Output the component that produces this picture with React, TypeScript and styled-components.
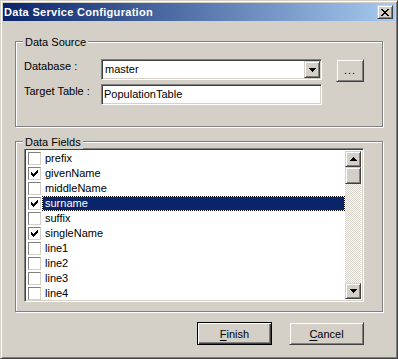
import styled, { createGlobalStyle, css } from 'styled-components';

const GlobalStyle = createGlobalStyle`
	html, body {
		margin: 0;
		padding: 0;
		background: #d4d0c8;
	}

	body {
		font-family: "Liberation Sans", Arial, sans-serif;
		font-size: 11px;
		color: #000;
	}
`;

const raised = css`
	box-sizing: border-box;
	background: #d4d0c8;
	border: 1px solid;
	border-color: #d4d0c8 #404040 #404040 #d4d0c8;
	box-shadow: inset 1px 1px #fff, inset -1px -1px #808080;
`;

const sunken = css`
	box-sizing: border-box;
	background: #fff;
	border: 1px solid;
	border-color: #808080 #fff #fff #808080;
	box-shadow: inset 1px 1px #404040, inset -1px -1px #d4d0c8;
`;

const Window = styled.div`
	width: 398px;
	height: 359px;
	box-sizing: border-box;
	padding: 2px;
	background: #d4d0c8;
	border: 1px solid;
	border-color: #d4d0c8 #404040 #404040 #d4d0c8;
	box-shadow: inset 1px 1px #fff, inset -1px -1px #808080;
	display: flex;
	flex-direction: column;
`;

const TitleBar = styled.div`
	height: 18px;
	display: flex;
	align-items: center;
	padding: 0 2px 0 1px;
	background: linear-gradient(to right, #0a246a, #a6caf0);
	color: #fff;
	font-weight: bold;
	font-size: 11px;
	letter-spacing: 0.3px;
`;

const TitleText = styled.span`
	flex: 1;
	white-space: nowrap;
`;

const CloseButton = styled.div`
	${raised};
	width: 16px;
	height: 14px;
	display: flex;
	align-items: center;
	justify-content: center;
`;

const Body = styled.div`
	padding: 20px 31px 0 12px;
	display: flex;
	flex-direction: column;
`;

const Group = styled.div<{ $height: number; $gap?: number }>`
	position: relative;
	box-sizing: border-box;
	width: 368px;
	height: ${(p) => p.$height}px;
	margin-top: ${(p) => p.$gap || 0}px;
	border: 1px solid #808080;
	box-shadow: inset 1px 1px #fff, 1px 1px #fff;
`;

const Caption = styled.span`
	position: absolute;
	top: -6px;
	left: 7px;
	padding: 0 2px;
	line-height: 13px;
	background: #d4d0c8;
`;

const SourceGrid = styled.div`
	display: grid;
	grid-template-columns: 77px 221px 42px;
	grid-template-rows: 21px 21px;
	row-gap: 4px;
	padding: 17px 0 0 8px;
`;

const Label = styled.span`
	align-self: start;
	margin-top: 1px;
	line-height: 13px;
	white-space: nowrap;
`;

const Combo = styled.div`
	${sunken};
	height: 21px;
	padding: 1px;
	display: flex;
	align-items: center;
`;

const FieldText = styled.span<{ $indent: number }>`
	flex: 1;
	padding-left: ${(p) => p.$indent}px;
	line-height: 13px;
`;

const DropButton = styled.div`
	${raised};
	width: 16px;
	height: 17px;
	display: flex;
	align-items: center;
	justify-content: center;
`;

const TextBox = styled.div`
	${sunken};
	height: 21px;
	padding: 1px;
	display: flex;
	align-items: center;
`;

const BrowseButton = styled.div`
	${raised};
	width: 28px;
	height: 23px;
	margin-left: 14px;
	display: flex;
	align-items: center;
	justify-content: center;
	padding-bottom: 2px;
	letter-spacing: 1px;
`;

const FieldsInner = styled.div`
	padding: 6px 0 0 8px;
`;

const ListBox = styled.div`
	${sunken};
	width: 340px;
	height: 154px;
	padding: 2px;
	display: flex;
`;

const Rows = styled.div`
	flex: 1;
	display: flex;
	flex-direction: column;
`;

const Row = styled.div`
	height: 15px;
	display: flex;
	align-items: center;
`;

const CheckBox = styled.div`
	box-sizing: border-box;
	width: 13px;
	height: 13px;
	margin-left: 1px;
	background: #fff;
	border: 1px solid;
	border-color: #808080 #d4d0c8 #d4d0c8 #808080;
	display: flex;
	align-items: center;
	justify-content: center;
`;

const ItemLabel = styled.span<{ $selected: boolean }>`
	flex: 1;
	box-sizing: border-box;
	height: 15px;
	margin-left: 1px;
	padding: 0 2px;
	line-height: 13px;
	border: 1px solid transparent;
	${(p) =>
		p.$selected &&
		css`
			color: #fff;
			border: 1px dotted #000;
			background: linear-gradient(#0a246a, #0a246a) padding-box,
				linear-gradient(#fff, #fff) border-box;
		`}
`;

const ScrollBar = styled.div`
	width: 16px;
	display: flex;
	flex-direction: column;
	background-image: conic-gradient(#fff 25%, #d4d0c8 0 50%, #fff 0 75%, #d4d0c8 0);
	background-size: 2px 2px;
`;

const ScrollButton = styled.div<{ $size: number }>`
	${raised};
	width: 16px;
	height: ${(p) => p.$size}px;
	flex-shrink: 0;
	display: flex;
	align-items: center;
	justify-content: center;
`;

const Track = styled.div`
	flex: 1;
`;

const ButtonRow = styled.div`
	margin-top: 10px;
	display: flex;
	justify-content: flex-end;
	gap: 17px;
`;

const DialogButton = styled.div<{ $default?: boolean }>`
	${raised};
	width: 75px;
	height: 23px;
	display: flex;
	align-items: center;
	justify-content: center;
	${(p) =>
		p.$default &&
		css`
			border: 1px solid #000;
			box-shadow: inset 1px 1px #fff, inset -1px -1px #404040, inset -2px -2px #808080;
		`}

	u {
		text-decoration-thickness: 1px;
		text-underline-offset: 2px;
	}
`;

const Arrow = ({ up }: { up?: boolean }) => (
	<svg width="7" height="4" viewBox="0 0 7 4" shapeRendering="crispEdges">
		<path d={up ? 'M3 0h1v1h1v1h1v1h1v1H0V3h1V2h1V1h1z' : 'M0 0h7v1H6v1H5v1H4v1H3V3H2V2H1V1H0z'} fill="#000" />
	</svg>
);

const checkPixels = [
	'......#',
	'.....##',
	'#...###',
	'##.###.',
	'#####..',
	'.###...',
	'..#....'
];

const CheckMark = () => (
	<svg width="7" height="7" viewBox="0 0 7 7" shapeRendering="crispEdges">
		{checkPixels.map((line, y) =>
			line.split('').map((c, x) =>
				c === '#' ? <rect key={`${x}-${y}`} x={x} y={y} width="1" height="1" fill="#000" /> : null
			)
		)}
	</svg>
);

const fields = [
	{ name: 'prefix', checked: false },
	{ name: 'givenName', checked: true },
	{ name: 'middleName', checked: false },
	{ name: 'surname', checked: true, selected: true },
	{ name: 'suffix', checked: false },
	{ name: 'singleName', checked: true },
	{ name: 'line1', checked: false },
	{ name: 'line2', checked: false },
	{ name: 'line3', checked: false },
	{ name: 'line4', checked: false }
];

const App = () => {
	return (
		<>
			<GlobalStyle />
			<Window>
				<TitleBar>
					<TitleText>Data Service Configuration</TitleText>
					<CloseButton>
						<svg width="8" height="7" viewBox="0 0 8 7" shapeRendering="crispEdges">
							<path
								d="M0 0h2v1h1v1h2V1h1V0h2v1H7v1H6v1H5v1h1v1h1v1h1v1H6V6H5V5H3v1H2v1H0V6h1V5h1V4h1V3H2V2H1V1H0z"
								fill="#000"
							/>
						</svg>
					</CloseButton>
				</TitleBar>
				<Body>
					<Group $height={86}>
						<Caption>Data Source</Caption>
						<SourceGrid>
							<Label>Database :</Label>
							<Combo>
								<FieldText $indent={2}>master</FieldText>
								<DropButton>
									<Arrow />
								</DropButton>
							</Combo>
							<BrowseButton>...</BrowseButton>
							<Label>Target Table :</Label>
							<TextBox>
								<FieldText $indent={1}>PopulationTable</FieldText>
							</TextBox>
						</SourceGrid>
					</Group>
					<Group $height={171} $gap={14}>
						<Caption>Data Fields</Caption>
						<FieldsInner>
							<ListBox>
								<Rows>
									{fields.map((f) => (
										<Row key={f.name}>
											<CheckBox>{f.checked && <CheckMark />}</CheckBox>
											<ItemLabel $selected={!!f.selected}>{f.name}</ItemLabel>
										</Row>
									))}
								</Rows>
								<ScrollBar>
									<ScrollButton $size={16}>
										<Arrow up />
									</ScrollButton>
									<ScrollButton $size={17} />
									<Track />
									<ScrollButton $size={16}>
										<Arrow />
									</ScrollButton>
								</ScrollBar>
							</ListBox>
						</FieldsInner>
					</Group>
					<ButtonRow>
						<DialogButton $default>
							<span>
								<u>F</u>inish
							</span>
						</DialogButton>
						<DialogButton>
							<span>
								<u>C</u>ancel
							</span>
						</DialogButton>
					</ButtonRow>
				</Body>
			</Window>
		</>
	);
};

export default App;
